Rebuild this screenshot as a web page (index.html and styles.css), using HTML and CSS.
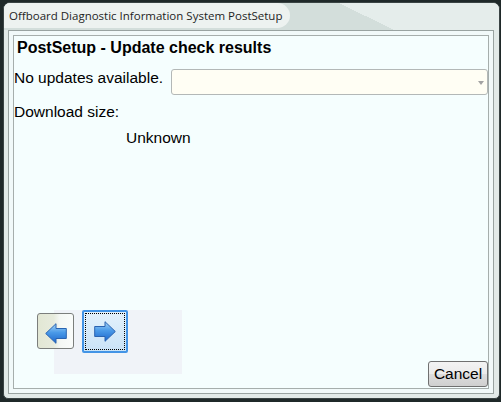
FILE: index.html
```html
<!DOCTYPE html>
<html>
<head>
<meta charset="utf-8">
<link rel="stylesheet" href="styles.css">
</head>
<body>
<div class="window">
  <div class="titlebar">
    <div class="title-glow"><span class="title">Offboard Diagnostic Information System PostSetup</span></div>
  </div>
  <div class="frame">
    <div class="panel">
      <h1 class="heading">PostSetup - Update check results</h1>
      <div class="row">
        <span class="label">No updates available.</span>
        <div class="combo"><span class="combo-arrow"></span></div>
      </div>
      <div class="line">Download size:</div>
      <div class="line value">Unknown</div>
      <div class="bottom">
        <div class="nav">
          <button class="nav-btn back" type="button">
            <svg class="arrow-left" width="22" height="21" viewBox="0 0 22 21">
              <defs>
                <linearGradient id="blueL" x1="0" y1="0" x2="0" y2="1">
                  <stop offset="0" stop-color="#a6d4f8"/>
                  <stop offset="0.45" stop-color="#4a9ae8"/>
                  <stop offset="1" stop-color="#1c66cc"/>
                </linearGradient>
              </defs>
              <path d="M0.7 10.5 L11 0.7 V5.5 H21.3 V15.5 H11 V20.3 Z" fill="url(#blueL)" stroke="#2a63b0" stroke-width="1" stroke-linejoin="round"/>
            </svg>
          </button>
          <button class="nav-btn next" type="button">
            <svg width="22" height="21" viewBox="0 0 22 21">
              <defs>
                <linearGradient id="blueR" x1="0" y1="0" x2="0" y2="1">
                  <stop offset="0" stop-color="#a6d4f8"/>
                  <stop offset="0.45" stop-color="#4a9ae8"/>
                  <stop offset="1" stop-color="#1c66cc"/>
                </linearGradient>
              </defs>
              <path d="M21.3 10.5 L11 0.7 V5.5 H0.7 V15.5 H11 V20.3 Z" fill="url(#blueR)" stroke="#2a63b0" stroke-width="1" stroke-linejoin="round"/>
            </svg>
          </button>
        </div>
        <button class="cancel" type="button">Cancel</button>
      </div>
    </div>
  </div>
</div>
</body>
</html>
```
FILE: styles.css
```css
html, body {
  margin: 0;
}
body {
  width: 501px;
  height: 402px;
  overflow: hidden;
  box-sizing: border-box;
  padding-top: 2px;
  background: #1f2929;
  font-family: "Liberation Sans", Arial, sans-serif;
}
.window {
  margin-left: 3px;
  width: 497px;
  height: 397px;
  box-sizing: border-box;
  border: 1px solid #3a4444;
  border-radius: 7px 7px 5px 5px;
  background: #e2eae8;
  overflow: hidden;
  padding: 0 5px 4px 4px;
  display: flex;
  flex-direction: column;
}
.titlebar {
  height: 27px;
  flex: 0 0 27px;
  margin: 0 -5px 0 -4px;
  background: linear-gradient(26deg, #d3dedb 70.9%, #e5edeb 70.9%);
  display: flex;
  align-items: flex-start;
}
.title-glow {
  width: 286px;
  height: 25px;
  box-sizing: border-box;
  padding-left: 5px;
  background: #edf2f0;
  border-radius: 0 14px 14px 0;
  white-space: nowrap;
}
.title {
  font-family: "Open Sans", "Noto Sans", sans-serif;
  font-size: 11.5px;
  line-height: 25px;
  color: #1e1e1e;
}
.frame {
  height: 364px;
  flex: 0 0 364px;
  box-sizing: border-box;
  border: 1px solid #99a3a1;
  padding: 4px;
  background: #f1f9f9;
}
.panel {
  height: 100%;
  box-sizing: border-box;
  border: 1px solid #a6aeac;
  background: #f5fefe;
  display: flex;
  flex-direction: column;
  color: #000;
  font-size: 15.5px;
}
.heading {
  margin: 2px 0 0;
  padding-left: 3px;
  font-size: 16px;
  font-weight: bold;
  line-height: 19px;
}
.row {
  display: flex;
  align-items: flex-start;
  margin-top: 12px;
}
.label {
  flex: 0 0 157px;
  line-height: 18px;
  white-space: nowrap;
}
.combo {
  flex: 1;
  height: 26px;
  box-sizing: border-box;
  border: 1px solid #b3b8b7;
  border-radius: 3px;
  background: #fffef4;
  display: flex;
  align-items: flex-start;
  justify-content: flex-end;
  padding-right: 3px;
}
.combo-arrow {
  width: 0;
  height: 0;
  margin-top: 11px;
  border-left: 3.5px solid transparent;
  border-right: 3.5px solid transparent;
  border-top: 4px solid #a3a3a3;
}
.line {
  margin-top: 8px;
  line-height: 18px;
}
.value {
  padding-left: 112px;
}
.bottom {
  margin-top: auto;
  display: flex;
  justify-content: space-between;
  align-items: flex-end;
}
.nav {
  margin-left: 40px;
  margin-bottom: 14px;
  width: 128px;
  height: 64px;
  background: #f0f3f8;
  display: flex;
  align-items: flex-start;
}
.nav-btn {
  padding: 0;
  box-sizing: border-box;
  display: flex;
  align-items: center;
  justify-content: center;
}
.back {
  margin-left: -17px;
  margin-top: 3px;
  width: 37px;
  height: 36px;
  border: 1px solid #7b7e7c;
  border-radius: 3px;
  background: linear-gradient(90deg, #e2e7d4 0, #e7ebdd 45%, #f4f7f4 62%, #fafcfb 100%);
}
.arrow-left {
  margin-top: 5px;
}
.next {
  margin-left: 8px;
  width: 46px;
  height: 43px;
  border: 2px solid #4394e6;
  border-radius: 2px;
  background: linear-gradient(#e4f2fc, #cae3f7);
  outline: 1px dotted #000;
  outline-offset: -4px;
}
.cancel {
  margin-bottom: 1px;
  width: 60px;
  height: 26px;
  padding: 0;
  box-sizing: border-box;
  border: 1px solid #707070;
  border-radius: 3px;
  background: linear-gradient(#f3f3f3, #ebebeb 48%, #dddddd 52%, #cfcfcf);
  font-family: "Liberation Sans", Arial, sans-serif;
  font-size: 15.5px;
  color: #000;
}
```
